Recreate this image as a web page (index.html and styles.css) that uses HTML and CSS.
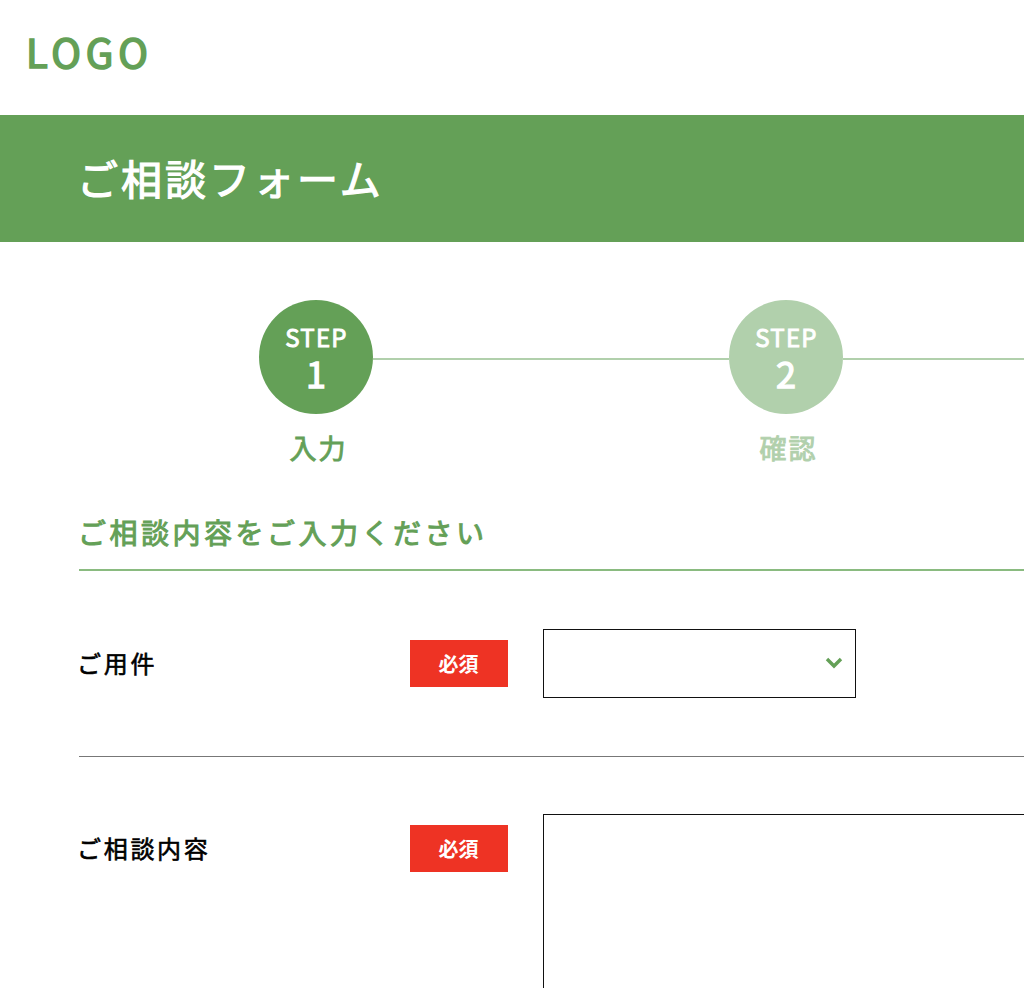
FILE: index.html
```html
<!DOCTYPE html>
<html lang="ja">
<head>
<meta charset="utf-8">
<title>ご相談フォーム</title>
<link rel="stylesheet" href="styles.css">
</head>
<body>
<header class="site-header"><span class="logo">LOGO</span></header>
<div class="banner"><h1 class="banner-title">ご相談フォーム</h1></div>
<ol class="steps">
  <li class="step">
    <div class="step-circle"><span class="step-word">STEP</span><span class="step-num">1</span></div>
    <span class="step-label">入力</span>
  </li>
  <li class="step-line"></li>
  <li class="step step-off">
    <div class="step-circle"><span class="step-word">STEP</span><span class="step-num">2</span></div>
    <span class="step-label">確認</span>
  </li>
  <li class="step-line"></li>
</ol>
<main class="form">
  <h2 class="form-heading">ご相談内容をご入力ください</h2>
  <div class="row row-select">
    <div class="row-label">ご用件</div>
    <span class="badge">必須</span>
    <div class="select-wrap">
      <select class="select" aria-label="ご用件"><option></option></select>
      <svg class="chevron" viewBox="0 0 18 12" width="18" height="12" aria-hidden="true"><path d="M2 2 9 9 16 2" fill="none" stroke="#64a057" stroke-width="3.4"/></svg>
    </div>
  </div>
  <div class="row row-area">
    <div class="row-label">ご相談内容</div>
    <span class="badge">必須</span>
    <textarea class="area" aria-label="ご相談内容"></textarea>
  </div>
</main>
</body>
</html>
```

FILE: styles.css
```css
* { box-sizing: border-box; }
html, body { margin: 0; padding: 0; height: 988px; overflow: hidden; background: #fff; }
body { font-family: "Noto Sans CJK JP", "Noto Sans", sans-serif; color: #000; }

.site-header { height: 115px; padding: 26px 0 0 26px; }
.logo { display: block; font-size: 40px; line-height: 50px; font-weight: 400; -webkit-text-stroke: 1.7px #64a057; letter-spacing: 4.8px; color: #64a057; }

.banner { height: 127px; background: #64a057; padding: 0 0 3px 77px; display: flex; align-items: center; }
.banner-title { margin: 0; font-size: 41px; line-height: 50px; font-weight: 400; -webkit-text-stroke: 1.2px #fff; letter-spacing: 3px; color: #fff; white-space: nowrap; }

.steps { list-style: none; margin: 0; padding: 58px 0 0 259px; display: flex; align-items: flex-start; height: 255px; }
.step { flex: 0 0 114px; display: flex; flex-direction: column; align-items: center; }
.step-circle { width: 114px; height: 114px; border-radius: 50%; background: #64a057; color: #fff; display: flex; flex-direction: column; align-items: center; padding-top: 23px; }
.step-word { padding-left: 1px; font-size: 24px; line-height: 28px; font-weight: 400; -webkit-text-stroke: 0.9px #fff; letter-spacing: 1.2px; }
.step-num { margin-top: 1px; font-size: 36px; line-height: 41px; font-weight: 400; -webkit-text-stroke: 1.3px #fff; }
.step-label { margin-top: 15px; padding-left: 5px; font-size: 27px; line-height: 38px; font-weight: 400; -webkit-text-stroke: 0.9px #64a057; letter-spacing: 2px; color: #64a057; white-space: nowrap; }
.step-off .step-circle { background: #b1d0ac; }
.step-off .step-label { color: #b1d0ac; -webkit-text-stroke-color: #b1d0ac; }
.step-line { flex: 0 0 356px; height: 2px; margin-top: 58px; background: #b1d0ac; }

.form { padding-left: 79px; width: 1300px; }
.form-heading { margin: 0; height: 74px; padding-top: 15px; text-indent: -1px; font-size: 28px; line-height: 40px; font-weight: 400; -webkit-text-stroke: 1px #64a057; letter-spacing: 3.5px; color: #64a057; border-bottom: 2px solid #8abb80; white-space: nowrap; }

.row { display: flex; align-items: flex-start; border-bottom: 1px solid #777; }
.row-select { height: 186px; padding-top: 58px; }
.row-area { padding-top: 57px; border-bottom: 0; }
.row-label { width: 333px; margin-left: -2px; padding-top: 14px; font-size: 24px; line-height: 40px; font-weight: 400; -webkit-text-stroke: 0.6px #000; letter-spacing: 2.7px; white-space: nowrap; }
.badge { flex: 0 0 98px; height: 47px; margin-top: 11px; margin-right: 35px; padding-right: 1px; background: #ee3324; color: #fff; font-size: 20px; line-height: 47px; font-weight: 700; text-align: center; }
.select-wrap { position: relative; width: 313px; height: 69px; }
.select { display: block; width: 100%; height: 100%; appearance: none; border: 1px solid #111; border-radius: 0; background: #fff; }
.chevron { position: absolute; right: 13px; top: 28px; }
.area { display: block; width: 600px; height: 400px; border: 1px solid #111; border-radius: 0; background: #fff; resize: none; }
```
